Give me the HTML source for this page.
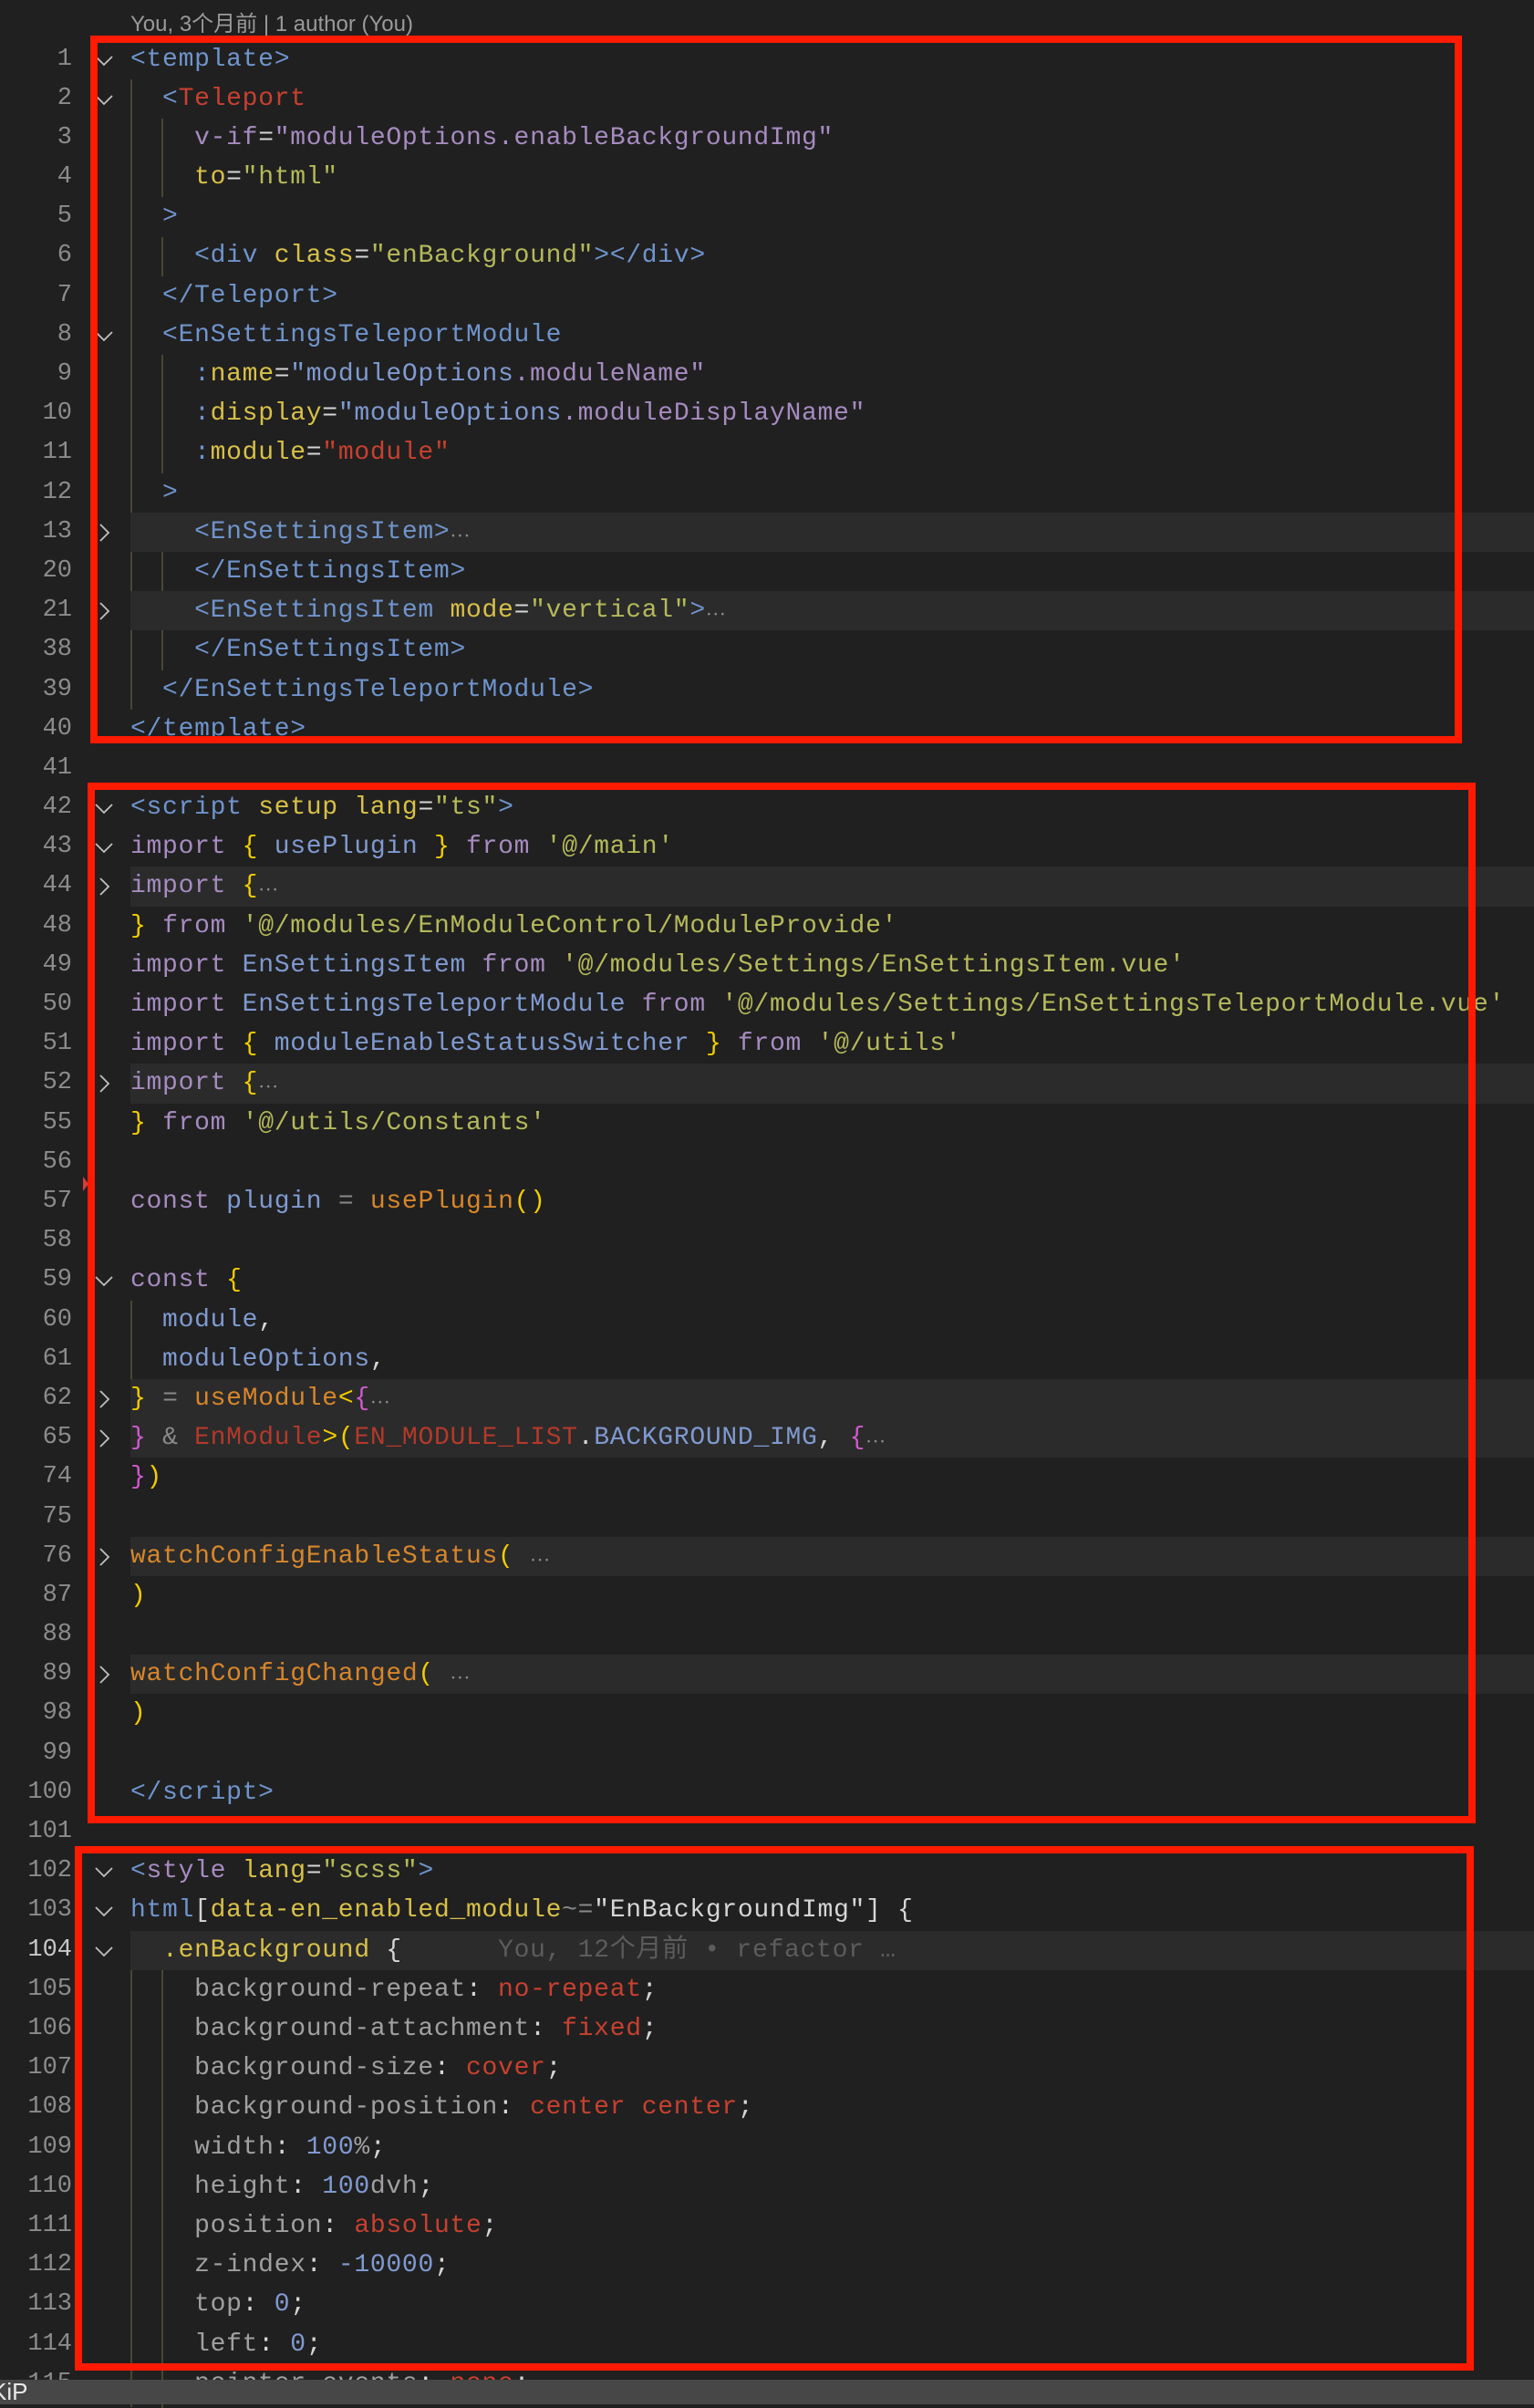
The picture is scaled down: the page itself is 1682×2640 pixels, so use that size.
<!DOCTYPE html>
<html><head><meta charset="utf-8">
<style>
html,body{margin:0;padding:0;background:#202020;}
body{width:1682px;height:2636px;position:relative;overflow:hidden;font-family:"Liberation Mono","Noto Sans CJK SC",monospace;}
#wrap{position:absolute;left:0;top:3px;width:1682px;height:2636px;}
.ln{position:absolute;left:0;width:1682px;height:43.19px;line-height:43.19px;}
.hl{background:#2b2b2b;position:absolute;left:143px;right:0;top:0;bottom:0;}
.n{position:absolute;left:0;width:79px;text-align:right;color:#8c8c8c;font-size:27px;}
.c{position:absolute;left:143px;white-space:pre;font-size:28px;letter-spacing:0.72px;color:#d4d4d4;}
.f{position:absolute;left:103px;top:11px;}
.g{position:absolute;width:2px;background:#4a4534;}
.box{position:absolute;border:8px solid #ff1a00;box-sizing:border-box;}
.t{color:#6f94cc}.r{color:#c8402f}.y{color:#d8c048}.s{color:#b5b95a}.p{color:#a68bc0}
.b{color:#7f9ad0}.w{color:#d6d6d6}.br{color:#f2cc00}.o{color:#d7862b}.pk{color:#d05ad0}
.dr{color:#b3392b}.gr{color:#8a8a8a}.cp{color:#a0a0a0}.e{color:#8a8a8a;font-size:20px;vertical-align:top}
</style></head><body>

<div style="position:absolute;left:143px;top:12px;font-family:'Liberation Sans Narrow','Liberation Sans','Noto Sans CJK SC',sans-serif;font-size:24px;color:#9a9a9a;line-height:30px;">You, 3个月前 | 1 author (You)</div>

<div id="wrap">
<!-- guides -->
<div class="g" style="left:143px;top:83.7px;height:691px"></div>
<div class="g" style="left:177px;top:126.9px;height:86.4px"></div>
<div class="g" style="left:177px;top:256.5px;height:43.2px"></div>
<div class="g" style="left:177px;top:386px;height:129.6px"></div>
<div class="g" style="left:177px;top:558.8px;height:172.8px"></div>
<div class="g" style="left:143px;top:1422.6px;height:86.4px"></div>
<div class="g" style="left:143px;top:2113.6px;height:522px"></div>
<div class="g" style="left:177px;top:2156.8px;height:480px"></div>

<div class="ln" style="top:40.5px"><span class="n">1</span><svg class="f" width="22" height="22"><polyline points="2,7 11,16 20,7" fill="none" stroke="#c0c0c0" stroke-width="1.8"/></svg><span class="c"><span class="t">&lt;template&gt;</span></span></div>
<div class="ln" style="top:83.69px"><span class="n">2</span><svg class="f" width="22" height="22"><polyline points="2,7 11,16 20,7" fill="none" stroke="#c0c0c0" stroke-width="1.8"/></svg><span class="c">  <span class="t">&lt;</span><span class="r">Teleport</span></span></div>
<div class="ln" style="top:126.88px"><span class="n">3</span><span class="c">    <span class="p">v-if</span><span class="w">=</span><span class="p">"moduleOptions.enableBackgroundImg"</span></span></div>
<div class="ln" style="top:170.07px"><span class="n">4</span><span class="c">    <span class="y">to</span><span class="w">=</span><span class="s">"html"</span></span></div>
<div class="ln" style="top:213.26px"><span class="n">5</span><span class="c">  <span class="t">&gt;</span></span></div>
<div class="ln" style="top:256.45px"><span class="n">6</span><span class="c">    <span class="t">&lt;div</span> <span class="y">class</span><span class="w">=</span><span class="s">"enBackground"</span><span class="t">&gt;&lt;/div&gt;</span></span></div>
<div class="ln" style="top:299.64px"><span class="n">7</span><span class="c">  <span class="t">&lt;/Teleport&gt;</span></span></div>
<div class="ln" style="top:342.83px"><span class="n">8</span><svg class="f" width="22" height="22"><polyline points="2,7 11,16 20,7" fill="none" stroke="#c0c0c0" stroke-width="1.8"/></svg><span class="c">  <span class="t">&lt;EnSettingsTeleportModule</span></span></div>
<div class="ln" style="top:386.02px"><span class="n">9</span><span class="c">    <span class="t">:</span><span class="y">name</span><span class="w">=</span><span class="b">"moduleOptions</span><span class="p">.moduleName"</span></span></div>
<div class="ln" style="top:429.21px"><span class="n">10</span><span class="c">    <span class="t">:</span><span class="y">display</span><span class="w">=</span><span class="b">"moduleOptions</span><span class="p">.moduleDisplayName"</span></span></div>
<div class="ln" style="top:472.4px"><span class="n">11</span><span class="c">    <span class="t">:</span><span class="y">module</span><span class="w">=</span><span class="r">"module"</span></span></div>
<div class="ln" style="top:515.59px"><span class="n">12</span><span class="c">  <span class="t">&gt;</span></span></div>
<div class="ln" style="top:558.78px"><div class="hl"></div><span class="n">13</span><svg class="f" width="22" height="22"><polyline points="7,2 16,11 7,20" fill="none" stroke="#c0c0c0" stroke-width="1.8"/></svg><span class="c">    <span class="t">&lt;EnSettingsItem&gt;</span><span class="e">⋯</span></span></div>
<div class="ln" style="top:601.97px"><span class="n">20</span><span class="c">    <span class="t">&lt;/EnSettingsItem&gt;</span></span></div>
<div class="ln" style="top:645.16px"><div class="hl"></div><span class="n">21</span><svg class="f" width="22" height="22"><polyline points="7,2 16,11 7,20" fill="none" stroke="#c0c0c0" stroke-width="1.8"/></svg><span class="c">    <span class="t">&lt;EnSettingsItem</span> <span class="y">mode</span><span class="w">=</span><span class="s">"vertical"</span><span class="t">&gt;</span><span class="e">⋯</span></span></div>
<div class="ln" style="top:688.35px"><span class="n">38</span><span class="c">    <span class="t">&lt;/EnSettingsItem&gt;</span></span></div>
<div class="ln" style="top:731.54px"><span class="n">39</span><span class="c">  <span class="t">&lt;/EnSettingsTeleportModule&gt;</span></span></div>
<div class="ln" style="top:774.73px"><span class="n">40</span><span class="c"><span class="t">&lt;/template&gt;</span></span></div>
<div class="ln" style="top:817.92px"><span class="n">41</span></div>
<div class="ln" style="top:861.11px"><span class="n">42</span><svg class="f" width="22" height="22"><polyline points="2,7 11,16 20,7" fill="none" stroke="#c0c0c0" stroke-width="1.8"/></svg><span class="c"><span class="t">&lt;script</span> <span class="y">setup</span> <span class="y">lang</span><span class="w">=</span><span class="s">"ts"</span><span class="t">&gt;</span></span></div>
<div class="ln" style="top:904.3px"><span class="n">43</span><svg class="f" width="22" height="22"><polyline points="2,7 11,16 20,7" fill="none" stroke="#c0c0c0" stroke-width="1.8"/></svg><span class="c"><span class="p">import</span> <span class="br">{</span> <span class="b">usePlugin</span> <span class="br">}</span> <span class="p">from</span> <span class="s">'@/main'</span></span></div>
<div class="ln" style="top:947.49px"><div class="hl"></div><span class="n">44</span><svg class="f" width="22" height="22"><polyline points="7,2 16,11 7,20" fill="none" stroke="#c0c0c0" stroke-width="1.8"/></svg><span class="c"><span class="p">import</span> <span class="br">{</span><span class="e">⋯</span></span></div>
<div class="ln" style="top:990.68px"><span class="n">48</span><span class="c"><span class="br">}</span> <span class="p">from</span> <span class="s">'@/modules/EnModuleControl/ModuleProvide'</span></span></div>
<div class="ln" style="top:1033.87px"><span class="n">49</span><span class="c"><span class="p">import</span> <span class="b">EnSettingsItem</span> <span class="p">from</span> <span class="s">'@/modules/Settings/EnSettingsItem.vue'</span></span></div>
<div class="ln" style="top:1077.06px"><span class="n">50</span><span class="c"><span class="p">import</span> <span class="b">EnSettingsTeleportModule</span> <span class="p">from</span> <span class="s">'@/modules/Settings/EnSettingsTeleportModule.vue'</span></span></div>
<div class="ln" style="top:1120.25px"><span class="n">51</span><span class="c"><span class="p">import</span> <span class="br">{</span> <span class="b">moduleEnableStatusSwitcher</span> <span class="br">}</span> <span class="p">from</span> <span class="s">'@/utils'</span></span></div>
<div class="ln" style="top:1163.44px"><div class="hl"></div><span class="n">52</span><svg class="f" width="22" height="22"><polyline points="7,2 16,11 7,20" fill="none" stroke="#c0c0c0" stroke-width="1.8"/></svg><span class="c"><span class="p">import</span> <span class="br">{</span><span class="e">⋯</span></span></div>
<div class="ln" style="top:1206.63px"><span class="n">55</span><span class="c"><span class="br">}</span> <span class="p">from</span> <span class="s">'@/utils/Constants'</span></span></div>
<div class="ln" style="top:1249.82px"><span class="n">56</span></div>
<div style="position:absolute;left:91px;top:1287px;width:0;height:0;border-top:8px solid transparent;border-bottom:8px solid transparent;border-left:6px solid #d04040"></div>
<div class="ln" style="top:1293.01px"><span class="n">57</span><span class="c"><span class="p">const</span> <span class="b">plugin</span> <span class="gr">=</span> <span class="o">usePlugin</span><span class="br">()</span></span></div>
<div class="ln" style="top:1336.2px"><span class="n">58</span></div>
<div class="ln" style="top:1379.39px"><span class="n">59</span><svg class="f" width="22" height="22"><polyline points="2,7 11,16 20,7" fill="none" stroke="#c0c0c0" stroke-width="1.8"/></svg><span class="c"><span class="p">const</span> <span class="br">{</span></span></div>
<div class="ln" style="top:1422.58px"><span class="n">60</span><span class="c">  <span class="b">module</span><span class="w">,</span></span></div>
<div class="ln" style="top:1465.77px"><span class="n">61</span><span class="c">  <span class="b">moduleOptions</span><span class="w">,</span></span></div>
<div class="ln" style="top:1508.96px"><div class="hl"></div><span class="n">62</span><svg class="f" width="22" height="22"><polyline points="7,2 16,11 7,20" fill="none" stroke="#c0c0c0" stroke-width="1.8"/></svg><span class="c"><span class="br">}</span> <span class="gr">=</span> <span class="o">useModule</span><span class="br">&lt;</span><span class="pk">{</span><span class="e">⋯</span></span></div>
<div class="ln" style="top:1552.15px"><div class="hl"></div><span class="n">65</span><svg class="f" width="22" height="22"><polyline points="7,2 16,11 7,20" fill="none" stroke="#c0c0c0" stroke-width="1.8"/></svg><span class="c"><span class="pk">}</span> <span class="gr">&amp;</span> <span class="dr">EnModule</span><span class="br">&gt;(</span><span class="dr">EN_MODULE_LIST</span><span class="w">.</span><span class="b">BACKGROUND_IMG</span><span class="w">,</span> <span class="pk">{</span><span class="e">⋯</span></span></div>
<div class="ln" style="top:1595.34px"><span class="n">74</span><span class="c"><span class="pk">}</span><span class="br">)</span></span></div>
<div class="ln" style="top:1638.53px"><span class="n">75</span></div>
<div class="ln" style="top:1681.72px"><div class="hl"></div><span class="n">76</span><svg class="f" width="22" height="22"><polyline points="7,2 16,11 7,20" fill="none" stroke="#c0c0c0" stroke-width="1.8"/></svg><span class="c"><span class="o">watchConfigEnableStatus</span><span class="br">(</span> <span class="e">⋯</span></span></div>
<div class="ln" style="top:1724.91px"><span class="n">87</span><span class="c"><span class="br">)</span></span></div>
<div class="ln" style="top:1768.1px"><span class="n">88</span></div>
<div class="ln" style="top:1811.29px"><div class="hl"></div><span class="n">89</span><svg class="f" width="22" height="22"><polyline points="7,2 16,11 7,20" fill="none" stroke="#c0c0c0" stroke-width="1.8"/></svg><span class="c"><span class="o">watchConfigChanged</span><span class="br">(</span> <span class="e">⋯</span></span></div>
<div class="ln" style="top:1854.48px"><span class="n">98</span><span class="c"><span class="br">)</span></span></div>
<div class="ln" style="top:1897.67px"><span class="n">99</span></div>
<div class="ln" style="top:1940.86px"><span class="n">100</span><span class="c"><span class="t">&lt;/script&gt;</span></span></div>
<div class="ln" style="top:1984.05px"><span class="n">101</span></div>
<div class="ln" style="top:2027.24px"><span class="n">102</span><svg class="f" width="22" height="22"><polyline points="2,7 11,16 20,7" fill="none" stroke="#c0c0c0" stroke-width="1.8"/></svg><span class="c"><span class="t">&lt;</span><span class="p">style</span> <span class="y">lang</span><span class="w">=</span><span class="s">"scss"</span><span class="t">&gt;</span></span></div>
<div class="ln" style="top:2070.43px"><span class="n">103</span><svg class="f" width="22" height="22"><polyline points="2,7 11,16 20,7" fill="none" stroke="#c0c0c0" stroke-width="1.8"/></svg><span class="c"><span class="t">html</span><span class="w">[</span><span class="y">data-en_enabled_module</span><span class="gr">~=</span><span class="w">"EnBackgroundImg"]</span> <span class="w">{</span></span></div>
<div class="ln" style="top:2113.62px"><div class="hl"></div><span class="n" style="color:#c8c8c8">104</span><svg class="f" width="22" height="22"><polyline points="2,7 11,16 20,7" fill="none" stroke="#c0c0c0" stroke-width="1.8"/></svg><span class="c">  <span class="y">.enBackground</span> <span class="w">{</span>      <span style="color:#5c5c5c">You, 12个月前 • refactor …</span></span></div>
<div class="ln" style="top:2156.81px"><span class="n">105</span><span class="c">    <span class="cp">background-repeat</span><span class="w">:</span> <span class="r">no-repeat</span><span class="w">;</span></span></div>
<div class="ln" style="top:2200px"><span class="n">106</span><span class="c">    <span class="cp">background-attachment</span><span class="w">:</span> <span class="r">fixed</span><span class="w">;</span></span></div>
<div class="ln" style="top:2243.19px"><span class="n">107</span><span class="c">    <span class="cp">background-size</span><span class="w">:</span> <span class="r">cover</span><span class="w">;</span></span></div>
<div class="ln" style="top:2286.38px"><span class="n">108</span><span class="c">    <span class="cp">background-position</span><span class="w">:</span> <span class="r">center center</span><span class="w">;</span></span></div>
<div class="ln" style="top:2329.57px"><span class="n">109</span><span class="c">    <span class="cp">width</span><span class="w">:</span> <span class="b">100</span><span class="cp">%</span><span class="w">;</span></span></div>
<div class="ln" style="top:2372.76px"><span class="n">110</span><span class="c">    <span class="cp">height</span><span class="w">:</span> <span class="b">100</span><span class="cp">dvh</span><span class="w">;</span></span></div>
<div class="ln" style="top:2415.95px"><span class="n">111</span><span class="c">    <span class="cp">position</span><span class="w">:</span> <span class="r">absolute</span><span class="w">;</span></span></div>
<div class="ln" style="top:2459.14px"><span class="n">112</span><span class="c">    <span class="cp">z-index</span><span class="w">:</span> <span class="b">-10000</span><span class="w">;</span></span></div>
<div class="ln" style="top:2502.33px"><span class="n">113</span><span class="c">    <span class="cp">top</span><span class="w">:</span> <span class="b">0</span><span class="w">;</span></span></div>
<div class="ln" style="top:2545.52px"><span class="n">114</span><span class="c">    <span class="cp">left</span><span class="w">:</span> <span class="b">0</span><span class="w">;</span></span></div>
<div class="ln" style="top:2588.71px"><span class="n">115</span><span class="c">    <span class="cp">pointer-events</span><span class="w">:</span> <span class="r">none</span><span class="w">;</span></span></div>
</div>

<div style="position:absolute;left:0;top:2609px;width:1682px;height:27px;background:#474747;overflow:hidden;"><span style="position:absolute;left:-10px;top:-2px;font-family:'Liberation Sans',sans-serif;font-size:26px;color:#e8e8e8;">KiP</span></div>

<div class="box" style="left:99px;top:39px;width:1504px;height:776px"></div>
<div class="box" style="left:96px;top:858px;width:1522px;height:1141px"></div>
<div class="box" style="left:82px;top:2024px;width:1534px;height:575px"></div>
</body></html>
